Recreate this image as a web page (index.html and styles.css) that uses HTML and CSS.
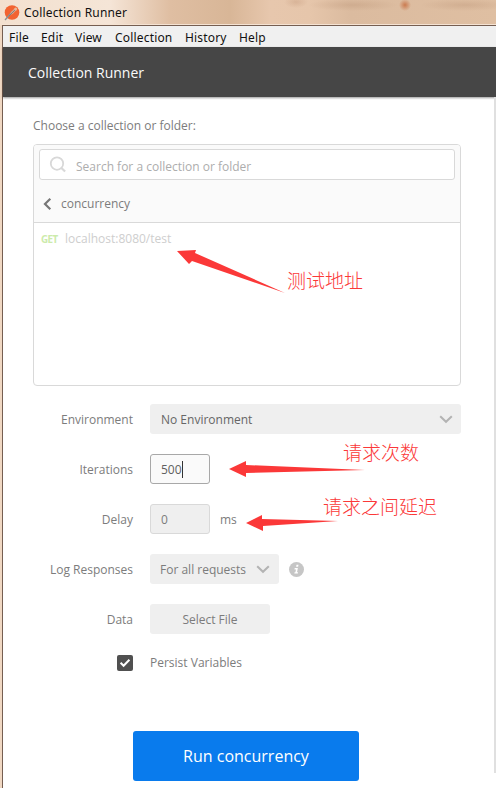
FILE: index.html
```html
<!DOCTYPE html>
<html lang="en">
<head>
<meta charset="utf-8">
<title>Collection Runner</title>
<link rel="stylesheet" href="styles.css">
</head>
<body>
<div class="window">
  <header class="titlebar">
    <svg class="logo" width="16" height="16" viewBox="0 0 16 16"><circle cx="8" cy="7.5" r="7.3" fill="#f26331"/><path d="M1 15 8.5 6.5" stroke="#8d8f91" stroke-width="1.4"/><path d="M5.5 10.5 7 7 10.5 3.5 12.5 5 9 8.8Z" fill="#d9a489"/><path d="M5 11 12 4" stroke="#817f7e" stroke-width="1"/><circle cx="11.7" cy="4" r="1.5" fill="#eab798"/></svg>
    <span class="title">Collection Runner</span>
  </header>
  <div class="frame">
    <nav class="menu"><span class="m-file">File</span><span class="m-edit">Edit</span><span class="m-view">View</span><span class="m-coll">Collection</span><span class="m-hist">History</span><span class="m-help">Help</span></nav>
    <div class="heading"><span>Collection Runner</span></div>
    <main class="content">
      <div class="choose"><span>Choose a collection or folder:</span></div>
      <section class="picker">
        <div class="picker-head">
          <div class="search">
            <svg width="18" height="18" viewBox="0 0 18 18" fill="none" stroke="#d8d8d8" stroke-width="1.8"><circle cx="8" cy="7.6" r="6.2"/><path d="m12.4 12 3.7 3.5" stroke-width="2.2"/></svg>
            <span>Search for a collection or folder</span>
          </div>
          <div class="crumb">
            <svg width="9" height="12" viewBox="0 0 9 12" fill="none" stroke="#777" stroke-width="2.2"><path d="M7.3.8 2 6l5.3 5.2"/></svg>
            <span>concurrency</span>
          </div>
        </div>
        <div class="request"><b>GET</b><span>localhost:8080/test</span></div>
      </section>
      <div class="form">
        <div class="row"><label>Environment</label><div class="select wide"><span>No Environment</span><svg width="14" height="9" viewBox="0 0 14 9" fill="none" stroke="#b3b3b3" stroke-width="2"><path d="m1.2 1.2 5.8 5.6 5.8-5.6"/></svg></div></div>
        <div class="row"><label>Iterations</label><div class="input focused"><span>500</span><i class="caret"></i></div></div>
        <div class="row"><label>Delay</label><div class="input"><span>0</span></div><span class="unit">ms</span></div>
        <div class="row"><label>Log Responses</label><div class="select small"><span>For all requests</span><svg width="14" height="9" viewBox="0 0 14 9" fill="none" stroke="#b3b3b3" stroke-width="2"><path d="m1.2 1.2 5.8 5.6 5.8-5.6"/></svg></div>
          <svg class="info" width="15" height="15" viewBox="0 0 15 15"><circle cx="7.5" cy="7.5" r="7.5" fill="#c6c6c6"/><path d="M7.5 2.8h2l-.4 1.9h-2zM5.7 6h3.2L8 10.2h1.1l-.3 1.4H5.3l.3-1.4h.8l.6-2.8H5.5z" fill="#fff"/></svg></div>
        <div class="row"><label>Data</label><div class="file"><span>Select File</span></div></div>
        <div class="row check"><div class="box"><svg width="16" height="16" viewBox="0 0 16 16" fill="none" stroke="#fff" stroke-width="2"><path d="m3.6 7.8 3 3 5.8-6"/></svg></div><span>Persist Variables</span></div>
      </div>
      <div class="run"><span>Run concurrency</span></div>
      <i class="scroll"></i>
    </main>
  </div>
  <svg class="marks" width="496" height="788" viewBox="0 0 496 788" fill="#fb3838"><path d="m177 251 19-1-1 3 90 40-93-32-3 3z"/><path d="m229 469 17-8v4l119 5-119 3v4z"/><path d="m246 523 16-8v4l76 2-75 5v5z"/></svg>
  <span class="note n1">测试地址</span>
  <span class="note n2">请求次数</span>
  <span class="note n3">请求之间延迟</span>
</div>
</body>
</html>
```
FILE: styles.css
```css
* { box-sizing: border-box; }
body { margin: 0; font: 12px/17px "Open Sans", "Noto Sans", sans-serif; color: #7c7c7c; }
.window { position: relative; width: 496px; height: 788px; overflow: hidden; background: linear-gradient(90deg, #f0d8c3, #e3c0a0); display: flex; flex-direction: column; }
svg { display: block; flex: none; }
span { white-space: nowrap; }
.titlebar { height: 25px; flex: none; padding-left: 4px; display: flex; align-items: center; gap: 4px; color: #111; font: 12px/20px "Noto Sans", sans-serif; letter-spacing: .17px; background: radial-gradient(circle 6px at 405px 5px, #cb7b50, rgba(203,123,80,0) 100%), radial-gradient(ellipse 45px 6px at 353px 5px, rgba(185,145,115,.35), transparent), radial-gradient(ellipse 45px 6px at 465px 5px, rgba(185,145,115,.35), transparent), radial-gradient(ellipse 12px 6px at 296px 2px, rgba(190,145,115,.35), transparent), linear-gradient(90deg, #f3e0cf 0, #f5e5d7 110px, #dfbea2 170px, #d8b697 230px, #e7c7ad 270px, #e6c6ab 310px, #dbbb9f 350px, #dfbfa2 496px); }
.frame { flex: 1; margin-left: 2px; border-left: 1px solid #755e51; border-top: 1px solid #755e51; box-shadow: 0 -1px #f5e3d3; background: #fff; display: flex; flex-direction: column; }
.menu { height: 21px; flex: none; display: flex; background: #f0f0f0; color: #111; font: 12px/24px "Noto Sans", sans-serif; letter-spacing: .18px; padding-left: 6px; }
.menu span { flex: none; }
.m-file { width: 32px; }
.m-edit { width: 34px; }
.m-view { width: 40px; }
.m-coll { width: 70px; }
.m-hist { width: 54px; }
.heading { height: 50px; flex: none; padding-left: 25px; background: #464646; color: #fafafa; font-size: 14px; line-height: 51px; box-shadow: 0 1px 2px rgba(0,0,0,.4); }
.content { position: relative; flex: 1; padding: 20px 32px 0 30px; display: flex; flex-direction: column; }
.choose { height: 27px; flex: none; }
.picker { width: 428px; height: 242px; border: 1px solid #d9d9d9; border-radius: 4px; overflow: hidden; }
.picker-head { height: 78px; padding: 4px 5px 0; background: #fafafa; border-bottom: 1px solid #d9d9d9; }
.search { height: 31px; border: 1px solid #d9d9d9; border-radius: 3px; background: #fff; display: flex; align-items: center; padding: 0 0 0 9px; gap: 9px; color: #adadad; }
.search span { padding-top: 4px; }
.search svg { margin-top: 1px; }
.crumb { height: 46px; display: flex; align-items: center; gap: 9px; padding: 1px 0 0 4px; }
.request { display: flex; align-items: baseline; padding: 7px 0 0 7px; color: #cecece; }
.request b { width: 24px; font: bold 9.8px/14px "Noto Sans", sans-serif; letter-spacing: -.6px; color: #ccebab; }
.form { margin-top: 18px; display: flex; flex-direction: column; gap: 20px; }
.row { height: 30px; display: flex; align-items: center; }
label { width: 100px; margin-right: 17px; text-align: right; padding-top: 1px; }
.select { height: 30px; border-radius: 3px; background: #efefef; display: flex; align-items: center; justify-content: space-between; padding: 0 9px 0 10px; }
.select span, .file span { padding-top: 1px; }
.wide { width: 311px; color: #666; padding-left: 11px; padding-right: 8px; }
.small { width: 129px; }
.input { width: 60px; height: 30px; border: 1px solid #d9d9d9; border-radius: 3px; background: #efefef; display: flex; align-items: center; padding: 1px 0 0 10px; }
.focused { background: #fafafa; border-color: #a8a8a8; color: #606060; }
.caret { width: 1px; height: 17px; background: #333; }
.unit { margin-left: 10px; padding-top: 1px; }
.info { margin-left: 10px; }
.file { width: 120px; height: 30px; border-radius: 3px; background: #efefef; display: flex; align-items: center; justify-content: center; }
.check { height: 18px; padding-left: 84px; align-items: flex-start; }
.box { width: 16px; height: 16px; border-radius: 2px; background: #505050; margin: 1px 17px 0 0; }
.run { width: 226px; height: 50px; margin: 59px 0 0 100px; border-radius: 3px; background: #097bed; color: #fff; font-size: 16px; line-height: 51px; text-align: center; }
.scroll { position: absolute; right: 0; top: 0; width: 2px; height: 676px; background: #e0e0e0; }
.marks { position: absolute; inset: 0; }
.note { position: absolute; color: #fb3838; font: 300 19px/24px "Noto Sans CJK SC", sans-serif; }
.n1 { left: 287px; top: 268px; }
.n2 { left: 343px; top: 440px; }
.n3 { left: 323px; top: 494px; }
```
